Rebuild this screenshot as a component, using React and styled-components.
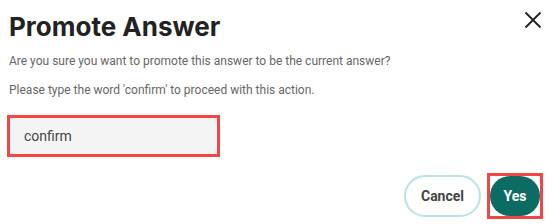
import styled, { createGlobalStyle } from "styled-components";

const GlobalStyle = createGlobalStyle`
  body {
    margin: 0;
    background: #ffffff;
    font-family: Roboto, "Liberation Sans", sans-serif;
  }
`;

const App = () => {
  return (
    <>
      <GlobalStyle />
      <Dialog>
        <Header>
          <Title>Promote Answer</Title>
          <CloseButton aria-label="close">
            <svg width="18" height="18" viewBox="0 0 18 18">
              <path
                d="M1.5 1.5 L16.5 16.5 M16.5 1.5 L1.5 16.5"
                stroke="#222"
                strokeWidth="1.8"
                fill="none"
              />
            </svg>
          </CloseButton>
        </Header>
        <Text>
          Are you sure you want to promote this answer to be the current answer?
        </Text>
        <Text>Please type the word 'confirm' to proceed with this action.</Text>
        <ConfirmInput defaultValue="confirm" />
        <Footer>
          <CancelButton>Cancel</CancelButton>
          <Highlight>
            <YesButton>Yes</YesButton>
          </Highlight>
        </Footer>
      </Dialog>
    </>
  );
};

const Dialog = styled.div`
  display: flex;
  flex-direction: column;
  width: 552px;
  height: 224px;
  box-sizing: border-box;
  padding: 10px 9px 5px 9px;
`;

const Header = styled.div`
  display: flex;
  align-items: flex-start;
  justify-content: space-between;
  height: 44px;
`;

const Title = styled.h1`
  margin: 0;
  font-family: Inter, Roboto, sans-serif;
  font-size: 26px;
  font-weight: 700;
  line-height: 34px;
  color: #222;
`;

const CloseButton = styled.button`
  border: none;
  background: none;
  padding: 0;
  width: 20px;
  height: 20px;
  display: flex;
  align-items: center;
  justify-content: center;
  cursor: pointer;
`;

const Text = styled.p`
  margin: 0 0 15px 0;
  font-size: 12px;
  line-height: 14px;
  color: #666;
`;

const ConfirmInput = styled.input`
  margin: 3px 0 0 -2px;
  width: 213px;
  height: 42px;
  box-sizing: border-box;
  border: 3px solid #f24646;
  background: #f4f4f4;
  padding: 0 14px;
  font-family: Roboto, sans-serif;
  font-size: 14px;
  color: #444;
  outline: none;
`;

const Footer = styled.div`
  display: flex;
  justify-content: flex-end;
  align-items: center;
  gap: 6px;
  margin-top: 16px;
`;

const CancelButton = styled.button`
  width: 77px;
  height: 42px;
  border: 2px solid #b5e4e4;
  border-radius: 21px;
  background: #fff;
  font-family: Roboto, sans-serif;
  font-size: 14px;
  font-weight: 700;
  color: #444;
  cursor: pointer;
`;

const Highlight = styled.div`
  border: 3px solid #f24646;
  display: flex;
`;

const YesButton = styled.button`
  width: 50px;
  height: 40px;
  border: none;
  border-radius: 20px;
  background: #0c6c63;
  font-family: Roboto, sans-serif;
  font-size: 14px;
  font-weight: 700;
  color: #fff;
  cursor: pointer;
`;

export default App;
